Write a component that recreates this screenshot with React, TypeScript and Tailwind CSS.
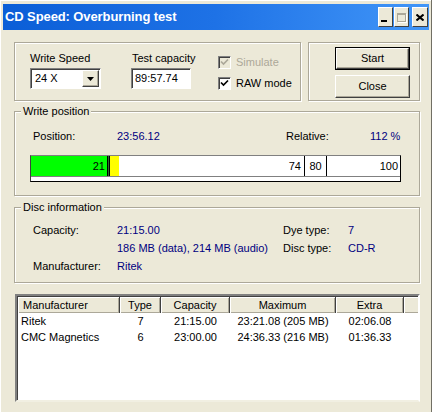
import React from "react"

function GroupBox({
  title,
  className,
  children,
}: {
  title?: string
  className?: string
  children?: React.ReactNode
}) {
  return (
    <div
      className={`relative border border-[#ACA899] shadow-[inset_1px_1px_0_#fff,1px_1px_0_#fff] ${className ?? ""}`}
    >
      {title && (
        <span className="absolute -top-[7px] left-[6px] px-[2px] bg-[#ECE9D8] leading-[13px]">
          {title}
        </span>
      )}
      {children}
    </div>
  )
}

function CheckBox({ checked, disabled }: { checked: boolean; disabled?: boolean }) {
  return (
    <div
      className={`w-[13px] h-[13px] border border-t-[#808080] border-l-[#808080] border-r-white border-b-white shadow-[inset_1px_1px_0_#404040] flex items-center justify-center ${
        disabled ? "bg-[#ECE9D8]" : "bg-white"
      }`}
    >
      {checked && (
        <svg width="9" height="9" viewBox="0 0 9 9">
          <path
            d="M1 3.5 L3.5 6 L8 1.5"
            fill="none"
            stroke={disabled ? "#ACA899" : "#000"}
            strokeWidth="1.7"
          />
        </svg>
      )}
    </div>
  )
}

function Button({ label, isDefault }: { label: string; isDefault?: boolean }) {
  return (
    <div className={`w-[75px] h-[23px] ${isDefault ? "border border-black" : ""}`}>
      <div className="w-full h-full border border-t-white border-l-white border-r-[#404040] border-b-[#404040] shadow-[inset_-1px_-1px_0_#ACA899] flex items-center justify-center leading-[13px]">
        {label}
      </div>
    </div>
  )
}

const rows = [
  { m: "Ritek", t: "7", c: "21:15.00", max: "23:21.08 (205 MB)", e: "02:06.08" },
  { m: "CMC Magnetics", t: "6", c: "23:00.00", max: "24:36.33 (216 MB)", e: "01:36.33" },
]

export default function App() {
  return (
    <div className="w-[435px] h-[412px] bg-white font-['Liberation_Sans',Arial,sans-serif] text-[11px] text-black overflow-hidden">
      <div className="w-[432px] h-[412px] bg-[#ECE9D8] border-r border-[#716F64] shadow-[inset_1px_1px_0_#fff] pt-[4px] pl-[3px] pr-[2px] flex flex-col">
        {/* Title bar */}
        <div className="h-[26px] flex items-center bg-gradient-to-r from-[#0A5ED7] via-[#1E72E6] to-[#4196F8] pl-[2px] pr-[1px]">
          <span className="text-white font-bold text-[13px] leading-[16px] flex-1 tracking-[-0.1px]">
            CD Speed: Overburning test
          </span>
          <div className="flex items-center">
            <div className="w-[15px] h-[20px] bg-[#ECE9D8] border border-t-white border-l-white border-r-[#404040] border-b-[#404040] flex items-end justify-start pl-[2px] pb-[4px]">
              <div className="w-[6px] h-[2px] bg-black" />
            </div>
            <div className="ml-[1px] w-[15px] h-[20px] bg-[#ECE9D8] border border-t-white border-l-white border-r-[#404040] border-b-[#404040] flex items-center justify-center">
              <div className="w-[9px] h-[9px] border border-t-2 border-[#ACA899] shadow-[1px_1px_0_#fff]" />
            </div>
            <div className="ml-[3px] w-[16px] h-[20px] bg-[#ECE9D8] border border-t-white border-l-white border-r-[#404040] border-b-[#404040] flex items-center justify-center">
              <svg width="8" height="7" viewBox="0 0 8 7">
                <path d="M0.5 0.5 L7.5 6.5 M7.5 0.5 L0.5 6.5" stroke="#000" strokeWidth="2" />
              </svg>
            </div>
          </div>
        </div>

        {/* Body */}
        <div className="flex flex-col pl-[11px] pr-[9px] pt-[12px]">
          {/* Row 1 */}
          <div className="flex gap-[7px] h-[59px]">
            <GroupBox className="w-[287px] h-full">
              <div className="flex pl-[15px] pt-[9px]">
                <div className="w-[101px] flex flex-col">
                  <span className="leading-[13px]">Write Speed</span>
                  <div className="mt-[3px] w-[71px] h-[21px] bg-white border border-t-[#808080] border-l-[#808080] border-r-white border-b-white shadow-[inset_1px_1px_0_#404040] flex items-center pl-[4px] pr-[1px]">
                    <span className="flex-1 leading-[13px]">24 X</span>
                    <div className="w-[17px] h-[17px] bg-[#ECE9D8] border border-t-white border-l-white border-r-[#404040] border-b-[#404040] shadow-[inset_-1px_-1px_0_#ACA899] flex items-center justify-center">
                      <svg width="7" height="4" viewBox="0 0 7 4">
                        <path d="M0 0 H7 L3.5 4 Z" fill="#000" />
                      </svg>
                    </div>
                  </div>
                </div>
                <div className="w-[87px] flex flex-col">
                  <span className="leading-[13px] pl-[1px]">Test capacity</span>
                  <div className="mt-[3px] w-[60px] h-[21px] bg-white border border-t-[#808080] border-l-[#808080] border-r-white border-b-white shadow-[inset_1px_1px_0_#404040] flex items-center pl-[3px]">
                    <span className="leading-[13px]">89:57.74</span>
                  </div>
                </div>
                <div className="flex flex-col pt-[4px] gap-[8px]">
                  <div className="flex items-center gap-[5px]">
                    <CheckBox checked disabled />
                    <span className="leading-[13px] text-[#ACA899]">Simulate</span>
                  </div>
                  <div className="flex items-center gap-[5px]">
                    <CheckBox checked />
                    <span className="leading-[13px]">RAW mode</span>
                  </div>
                </div>
              </div>
            </GroupBox>
            <GroupBox className="flex-1 h-full">
              <div className="flex flex-col items-end pr-[9px] pt-[4px] gap-[5px]">
                <Button label="Start" isDefault />
                <Button label="Close" />
              </div>
            </GroupBox>
          </div>

          {/* Write position */}
          <GroupBox title="Write position" className="mt-[10px] h-[85px]">
            <div className="flex pl-[18px] mt-[18px] leading-[13px]">
              <span className="w-[84px]">Position:</span>
              <span className="w-[169px] text-[#000080]">23:56.12</span>
              <span className="w-[84px]">Relative:</span>
              <span className="text-[#000080]">112 %</span>
            </div>
            <div className="ml-[15px] mt-[12px] w-[371px] border border-black border-t-[#808080] border-l-[#404040] bg-white">
              <div className="flex h-[21px] leading-[13px] border-b border-[#808080]">
                <div className="w-[76px] bg-[#00FF00] flex items-center justify-end pr-[2px]">21</div>
                <div className="w-[1px] bg-black" />
                <div className="w-[1px] bg-[#2E6B2E]" />
                <div className="w-[1px] bg-black" />
                <div className="w-[9px] bg-[#FFFF00]" />
                <div className="w-[185px] flex items-center justify-end pr-[3px]">74</div>
                <div className="w-[1px] bg-black" />
                <div className="w-[21px] flex items-center justify-center">80</div>
                <div className="w-[1px] bg-black" />
                <div className="flex-1 flex items-center justify-end pr-[2px]">100</div>
              </div>
              <div className="h-[4px]" />
            </div>
          </GroupBox>

          {/* Disc information */}
          <GroupBox title="Disc information" className="mt-[11px] h-[76px]">
            <div className="flex flex-col pl-[18px] mt-[13px]">
              <div className="flex h-[18px] items-center leading-[13px]">
                <span className="w-[84px]">Capacity:</span>
                <span className="w-[166px] text-[#000080]">21:15.00</span>
                <span className="w-[65px]">Dye type:</span>
                <span className="text-[#000080]">7</span>
              </div>
              <div className="flex h-[18px] items-center leading-[13px]">
                <span className="w-[84px]" />
                <span className="w-[166px] text-[#000080]">186 MB (data), 214 MB (audio)</span>
                <span className="w-[65px]">Disc type:</span>
                <span className="text-[#000080]">CD-R</span>
              </div>
              <div className="flex h-[19px] items-center leading-[13px]">
                <span className="w-[84px]">Manufacturer:</span>
                <span className="text-[#000080]">Ritek</span>
              </div>
            </div>
          </GroupBox>

          {/* List */}
          <div className="mt-[11px] ml-[1px] h-[108px] bg-white border-2 border-t-[#808080] border-l-[#808080] border-r-white border-b-[#F1EFE2] shadow-[inset_1px_1px_0_#404040] pt-[1px] pl-[1px]">
            <div className="flex h-[16px] leading-[13px]">
              <div className="w-[102px] bg-[#ECE9D8] border-r border-[#404040] shadow-[inset_1px_1px_0_#fff,inset_-1px_-1px_0_#ACA899] flex items-center pl-[5px]">
                Manufacturer
              </div>
              <div className="w-[41px] bg-[#ECE9D8] border-r border-[#404040] shadow-[inset_1px_1px_0_#fff,inset_-1px_-1px_0_#ACA899] flex items-center justify-center">
                Type
              </div>
              <div className="w-[69px] bg-[#ECE9D8] border-r border-[#404040] shadow-[inset_1px_1px_0_#fff,inset_-1px_-1px_0_#ACA899] flex items-center justify-center">
                Capacity
              </div>
              <div className="w-[106px] bg-[#ECE9D8] border-r border-[#404040] shadow-[inset_1px_1px_0_#fff,inset_-1px_-1px_0_#ACA899] flex items-center justify-center">
                Maximum
              </div>
              <div className="w-[68px] bg-[#ECE9D8] border-r border-[#404040] shadow-[inset_1px_1px_0_#fff,inset_-1px_-1px_0_#ACA899] flex items-center justify-center">
                Extra
              </div>
              <div className="flex-1 bg-[#ECE9D8] shadow-[inset_1px_1px_0_#fff,inset_0_-1px_0_#ACA899]" />
            </div>
            {rows.map((r) => (
              <div key={r.m} className="flex h-[16px] items-center leading-[13px]">
                <span className="w-[102px] pl-[3px]">{r.m}</span>
                <span className="w-[41px] text-center">{r.t}</span>
                <span className="w-[69px] text-center">{r.c}</span>
                <span className="w-[106px] text-center">{r.max}</span>
                <span className="w-[68px] text-center">{r.e}</span>
              </div>
            ))}
          </div>
        </div>
      </div>
    </div>
  )
}
